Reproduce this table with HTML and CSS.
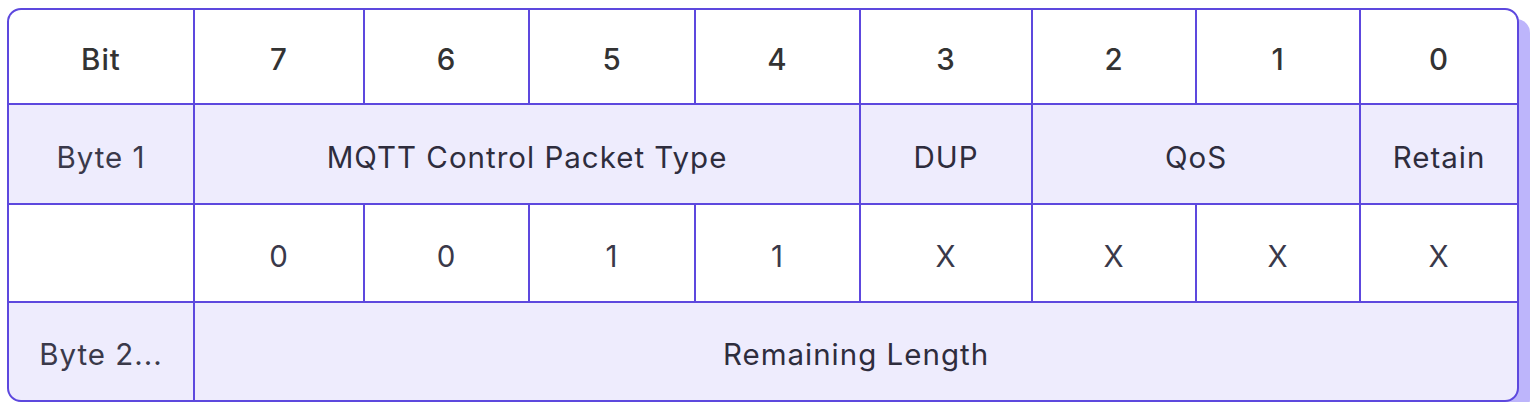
FILE: index.html
```html
<!DOCTYPE html>
<html>
<head>
<meta charset="utf-8">
<link rel="stylesheet" href="styles.css">
</head>
<body>
<div class="frame">
  <div class="grid">
    <div class="cell head">Bit</div>
    <div class="cell head">7</div>
    <div class="cell head">6</div>
    <div class="cell head">5</div>
    <div class="cell head">4</div>
    <div class="cell head">3</div>
    <div class="cell head">2</div>
    <div class="cell head">1</div>
    <div class="cell head">0</div>

    <div class="cell tint label">Byte 1</div>
    <div class="cell tint span4">MQTT Control Packet Type</div>
    <div class="cell tint">DUP</div>
    <div class="cell tint span2">QoS</div>
    <div class="cell tint">Retain</div>

    <div class="cell"></div>
    <div class="cell val">0</div>
    <div class="cell val">0</div>
    <div class="cell val">1</div>
    <div class="cell val">1</div>
    <div class="cell val">X</div>
    <div class="cell val">X</div>
    <div class="cell val">X</div>
    <div class="cell val">X</div>

    <div class="cell tint label">Byte 2...</div>
    <div class="cell tint span8">Remaining Length</div>
  </div>
</div>
</body>
</html>
```

FILE: styles.css
```css
html, body {
  margin: 0;
  padding: 0;
  background: #ffffff;
}

.frame {
  margin: 8px 0 0 7px;
  width: 1512px;
  box-sizing: border-box;
  border: 2px solid #5d48de;
  border-radius: 14px;
  overflow: hidden;
  box-shadow: 11px 11px 0 #bdb5fb;
  background: #5d48de;
}

.grid {
  display: grid;
  grid-template-columns: 184px 168px 163px 164px 163px 170px 162px 162px 156px;
  grid-template-rows: 93px 98px 96px 97px;
  gap: 2px;
  font-family: "Inter", "Liberation Sans", sans-serif;
  font-size: 29.5px;
  letter-spacing: 1px;
  color: #2e2d3d;
}

.cell {
  background: #ffffff;
  display: flex;
  align-items: center;
  justify-content: center;
  padding-top: 5px;
  box-sizing: border-box;
}

.head {
  color: #333333;
  font-weight: 500;
}

.tint {
  background: #eeecfd;
}

.label {
  color: #3a394a;
}

.val {
  color: #3a394a;
}

.span2 { grid-column: span 2; }
.span4 { grid-column: span 4; }
.span8 { grid-column: span 8; }
```
